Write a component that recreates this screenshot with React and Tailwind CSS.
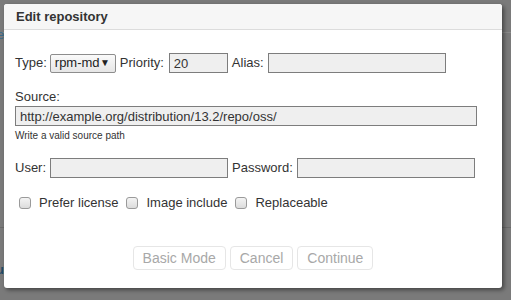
import React from "react";

const font = { fontFamily: '"Liberation Sans", Arial, sans-serif' };

const Field = ({ className = "", value = "" }) => (
  <input
    readOnly
    value={value}
    className={`h-[20px] border border-[#7d7d7d] bg-[#efefef] px-[4px] text-[13px] leading-[18px] text-[#333] outline-none ${className}`}
  />
);

const Check = ({ label }) => (
  <label className="flex items-center">
    <span className="mr-[8px] h-[12px] w-[12px] rounded-[3px] border border-[#9a9a9a] bg-gradient-to-b from-[#f4f4f4] to-[#dcdcdc]" />
    <span className="mr-[8px]">{label}</span>
  </label>
);

const Btn = ({ children }) => (
  <button
    disabled
    className="h-[24px] rounded-[4px] border border-[#e6e6e6] bg-white px-[9px] text-[14px] leading-[22px] text-[#a8a8a8]"
  >
    {children}
  </button>
);

export default function App() {
  return (
    <div className="relative h-[300px] w-[511px] overflow-hidden bg-[#7a7a7a]" style={font}>
      {/* page behind the overlay */}
      <div className="absolute left-0 top-[32px] h-px w-full bg-[#8a8a8a]" />
      <div className="absolute left-0 top-[227px] h-px w-full bg-[#6a6a6a]" />
      <div className="absolute left-[-3px] top-[25px] text-[13px] text-[#3a6a8a]">e</div>
      <div className="absolute left-[-4px] top-[260px] text-[13px] font-bold text-[#1f4a66]">u</div>

      {/* dialog */}
      <div className="absolute left-[4px] top-[4px] flex h-[284px] w-[498px] flex-col rounded-[3px] bg-white text-[13px] leading-[16px] text-[#333] shadow-[2px_2px_4px_rgba(0,0,0,0.45)]">
        <div className="flex h-[26px] items-center rounded-t-[3px] border-b border-[#dcdcdc] bg-[#f6f6f6] px-[12px] font-bold">
          Edit repository
        </div>

        <div className="flex flex-col px-[11px]">
          <div className="mt-[23px] flex h-[20px] items-center">
            <span>Type:</span>
            <div className="ml-[3px] flex h-[19px] w-[66px] items-center justify-between rounded-[2px] border border-[#8d8d8d] bg-gradient-to-b from-[#fafafa] to-[#e6e6e6] pl-[4px] pr-[5px] text-[13px] text-[#222]">
              <span>rpm-md</span>
              <span className="text-[10px]">▼</span>
            </div>
            <span className="ml-[4px]">Priority:</span>
            <Field className="ml-[5px] w-[59px]" value="20" />
            <span className="ml-[4px]">Alias:</span>
            <Field className="ml-[4px] w-[178px]" />
          </div>

          <div className="mt-[16px]">Source:</div>
          <Field
            className="mt-[1px] w-[462px]"
            value="http://example.org/distribution/13.2/repo/oss/"
          />
          <div className="mt-[4px] text-[10px] leading-[12px] text-[#333]">Write a valid source path</div>

          <div className="mt-[16px] flex h-[20px] items-center">
            <span>User:</span>
            <Field className="ml-[4px] w-[178px]" />
            <span className="ml-[4px]">Password:</span>
            <Field className="ml-[4px] w-[178px]" />
          </div>

          <div className="mt-[17px] flex items-center pl-[4px]">
            <Check label="Prefer license" />
            <Check label="Image include" />
            <Check label="Replaceable" />
          </div>

          <div className="mt-[35px] flex justify-center gap-[4px]">
            <Btn>Basic Mode</Btn>
            <Btn>Cancel</Btn>
            <Btn>Continue</Btn>
          </div>
        </div>
      </div>
    </div>
  );
}
